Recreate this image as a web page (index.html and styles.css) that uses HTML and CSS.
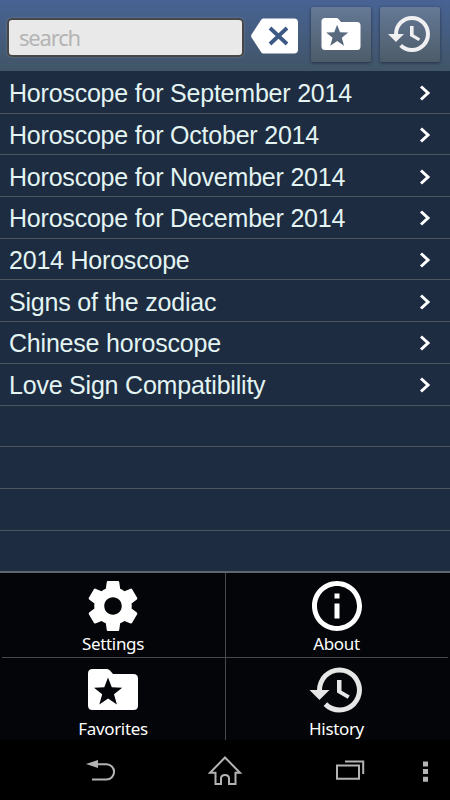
FILE: index.html
```
<!DOCTYPE html>
<html lang="en">
<head>
<meta charset="utf-8">
<meta name="viewport" value="width=device-width, initial-scale=1">
<title>Horoscope</title>
<link rel="stylesheet" href="styles.css">
</head>
<body>
<svg class="defs">
	<symbol id="i-folder" viewBox="0 0 50 41">
		<path fill-rule="evenodd" d="M4.5 0H19q1.800 0 3 1.500L25 5h20.500Q50 5 50 9.500v27Q50 41 45.500 41h-41Q0 41 0 36.500v-32Q0 0 4.500 0zM20 8.500l-3.700 9.700L6 18.700l8.200 6.500-2.900 10.300 8.800-6 8.800 6-2.900-10.300 8.200-6.500-10.400-.5z"/>
	</symbol>
	<symbol id="i-history" viewBox="0 0 24 24">
		<path d="M13 3a9 9 0 0 0-9 9H1l3.890 3.890.070.140L9 12H6c0-3.870 3.130-7 7-7s7 3.130 7 7-3.130 7-7 7c-1.930 0-3.680-.790-4.940-2.060l-1.420 1.420A8.954 8.954 0 0 0 13 21a9 9 0 0 0 0-18zm-1 5v5l4.280 2.540.820-1.310-3.300-1.980V8H12z"/>
	</symbol>
	<symbol id="i-next" viewBox="0 0 12 16">
		<path d="M2 1.500L9 8l-7 6.500" fill="none" stroke="#fff" stroke-width="3"/>
	</symbol>
</svg>

<form class="header">
	<input class="search" type="text" placeholder="search">
	<button class="clear" type="reset">
		<svg viewBox="0 0 47 36"><path fill="#fff" d="M12 .5h31q4 0 4 4v27q0 4-4 4H12q-1 0-2-1.500L.5 19.500q-.8-1.500 0-3L10 2q1-1.500 2-1.500z"/><path d="M19 10l17 16M36 10L19 26" stroke="#3d5a86" stroke-width="3.800"/></svg>
	</button>
	<button class="tool" type="button"><svg class="folder"><use href="#i-folder"/></svg></button>
	<button class="tool" type="button"><svg class="history"><use href="#i-history"/></svg></button>
</form>

<ul class="list">
	<li>Horoscope for September 2014<svg><use href="#i-next"/></svg></li>
	<li>Horoscope for October 2014<svg><use href="#i-next"/></svg></li>
	<li>Horoscope for November 2014<svg><use href="#i-next"/></svg></li>
	<li>Horoscope for December 2014<svg><use href="#i-next"/></svg></li>
	<li>2014 Horoscope<svg><use href="#i-next"/></svg></li>
	<li>Signs of the zodiac<svg><use href="#i-next"/></svg></li>
	<li>Chinese horoscope<svg><use href="#i-next"/></svg></li>
	<li>Love Sign Compatibility<svg><use href="#i-next"/></svg></li>
	<li></li>
	<li></li>
	<li></li>
	<li></li>
</ul>

<div class="menu">
	<div class="item">
		<svg class="icon" viewBox="0 0 24 24"><path d="M19.430 12.980c.040-.320.070-.640.070-.980s-.030-.660-.070-.980l2.110-1.650c.190-.150.240-.420.120-.640l-2-3.460c-.120-.220-.390-.300-.610-.220l-2.490 1c-.520-.400-1.080-.730-1.690-.980l-.380-2.650C14.460 2.180 14.250 2 14 2h-4c-.250 0-.460.180-.490.420l-.380 2.650c-.610.250-1.170.590-1.690.980l-2.490-1c-.230-.090-.490 0-.610.220l-2 3.460c-.130.220-.070.490.120.640l2.110 1.650c-.040.320-.070.650-.070.980s.030.660.070.980l-2.110 1.650c-.190.150-.240.420-.120.640l2 3.460c.120.220.390.300.610.220l2.490-1c.520.400 1.080.730 1.690.980l.380 2.650c.030.240.240.420.490.420h4c.250 0 .460-.180.490-.420l.380-2.650c.610-.250 1.170-.590 1.690-.980l2.490 1c.230.090.490 0 .610-.220l2-3.460c.120-.220.070-.490-.120-.640l-2.110-1.650zM12 15.500c-1.930 0-3.500-1.570-3.500-3.500s1.570-3.500 3.500-3.500 3.500 1.570 3.500 3.500-1.570 3.500-3.500 3.500z"/></svg>
		<span>Settings</span>
	</div>
	<div class="item">
		<svg class="icon" viewBox="0 0 24 24"><path d="M11 17h2v-6h-2v6zm1-15C6.480 2 2 6.480 2 12s4.480 10 10 10 10-4.480 10-10S17.520 2 12 2zm0 18c-4.410 0-8-3.590-8-8s3.590-8 8-8 8 3.590 8 8-3.590 8-8 8zM11 9h2V7h-2v2z"/></svg>
		<span>About</span>
	</div>
	<div class="item">
		<svg class="icon folder"><use href="#i-folder"/></svg>
		<span>Favorites</span>
	</div>
	<div class="item">
		<svg class="icon history"><use href="#i-history"/></svg>
		<span>History</span>
	</div>
</div>

<div class="nav">
	<svg viewBox="0 0 450 60">
		<path d="M97 24.200h9.500a7.600 7.600 0 0 1 0 15.200H92" class="line"/>
		<path d="M86 24l12-4v8z" fill="#b4b4b4"/>
		<path d="M225 17.500l15 15.200h-4.500V44h-6.500v-5.500q0-3.500-4-3.500t-4 3.500V44h-5.500V32.700H210z" class="line"/>
		<path d="M337 25.500h22v13.300h-22zM345 21.500h18.200V34" class="line"/>
		<path d="M423 21.500h5v5h-5zM423 29h5v5h-5zM423 36.700h5v5h-5z" fill="#b4b4b4"/>
	</svg>
</div>
</body>
</html>
```
FILE: styles.css
```
*{box-sizing: border-box;}
body{
	margin: 0;
	width: 450px;
	height: 800px;
	display: flex;
	flex-direction: column;
	overflow: hidden;
	font-family: 'Liberation Sans', Arial, sans-serif;
	background: #000;
}
svg{display: block; flex: none;}
.defs{display: none;}
button{
	border: 0;
	padding: 0;
	background: none;
}

.header{
	display: flex;
	flex: none;
	align-items: flex-start;
	height: 71px;
	padding: 7px 10px 0 7px;
	background: linear-gradient(#486394, #415567);
}
.search{
	width: 237px;
	height: 39px;
	margin-top: 11px;
	padding: 0 10px 2px;
	border: 2px solid #474747;
	border-radius: 5px;
	outline: 0;
	background: #e9e9e9;
	box-shadow: 0 0 2px rgba(200, 200, 200, .4);
	font: 22px 'Noto Sans', sans-serif;
	letter-spacing: -1.2px;
}
.search::placeholder{color: #b4b4b4;}
.clear{margin: 11px 13px 0 7px;}
.clear svg{
	width: 47px;
	height: 36px;
}
.tool{
	display: flex;
	width: 60px;
	height: 55px;
	border-radius: 2px;
	background: linear-gradient(#657996, #4d5c69);
	box-shadow: 0 1px 3px rgba(20, 30, 45, .7);
}
.tool + .tool{margin-left: 9px;}
.tool .folder{
	width: 40px;
	height: 32px;
	margin: 11px 0 0 10px;
	fill: #fff;
}
.tool .history{
	width: 48px;
	height: 48px;
	margin: 3px 0 0 6px;
	fill: #f0f0f2;
}

.list{
	flex: none;
	height: 500px;
	margin: 0;
	padding: 1px 0 0;
	overflow: hidden;
	list-style: none;
	display: grid;
	grid-template-rows: repeat(12, 41.7px);
	background: #1d2c41;
	color: #e3f4f2;
	font-size: 25px;
	letter-spacing: -.21px;
}
.list li{
	display: flex;
	align-items: center;
	justify-content: space-between;
	padding: 3px 19px 0 9px;
	border-bottom: 1px solid #4d5561;
	white-space: nowrap;
}
.list li:last-child{border: 0;}
.list svg{
	width: 12px;
	height: 16px;
	margin-bottom: 1px;
}

.menu{
	flex: none;
	height: 169px;
	padding: 0 2px;
	border-top: 2px solid #60666f;
	display: grid;
	grid-template-columns: 224px 222px;
	grid-template-rows: 85px 82px;
	background: #030508;
}
.item{
	display: flex;
	flex-direction: column;
	align-items: center;
	padding: 3px 1px 0 0;
	color: #fff;
	font: 17px/22px 'Noto Sans', sans-serif;
	letter-spacing: -.35px;
}
.item:nth-child(odd){border-right: 1px solid #45484c;}
.item:nth-child(-n+2){border-bottom: 1px solid #45484c;}
.icon{
	width: 60px;
	height: 60px;
	margin-bottom: -3px;
	fill: #fff;
}
.icon.folder{
	width: 50px;
	height: 41px;
	margin: 8px 0;
}
.icon.history{
	margin: -1px 0 -2px;
	fill: #e6e6e6;
}

.nav{
	flex: none;
	height: 60px;
	background: #000;
}
.line{
	fill: none;
	stroke: #b4b4b4;
	stroke-width: 2;
}
```
